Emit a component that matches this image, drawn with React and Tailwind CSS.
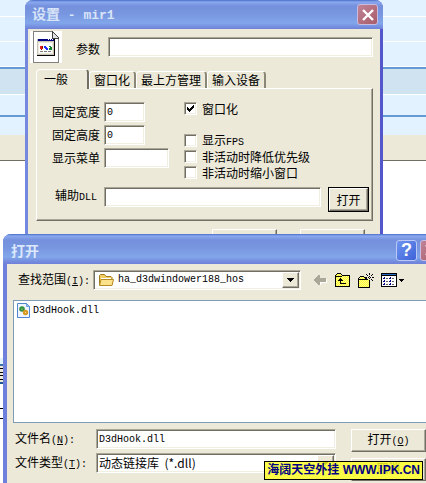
import { useState } from 'react'

// ------------------------------------------------------------
// Shared bevel styles
// ------------------------------------------------------------
const sunken =
  'border border-t-[#aca899] border-l-[#aca899] border-r-white border-b-white bg-white shadow-[inset_1px_1px_0_#716f64,inset_-1px_-1px_0_#f1efe2]'
const raised =
  'border border-t-white border-l-white border-r-[#716f64] border-b-[#716f64] bg-[#ece9d8] shadow-[inset_-1px_-1px_0_#aca899]'
const field = `${sunken} h-5 min-w-0 px-0.5 font-['Liberation_Mono',monospace] text-[10px] leading-[18px] outline-none`
const titleBar =
  'flex items-center bg-[linear-gradient(180deg,#4a6cc8_0,#8aa9f0_2px,#7590dc_6px,#7896e0_14px,#82a6ea_23px,#7894e2_26px,#6f80d8_100%)]'

const Mono = ({ children }) => (
  <span className="font-['Liberation_Mono',monospace] text-[10px]">{children}</span>
)

// ------------------------------------------------------------
// Icons
// ------------------------------------------------------------
const AppIcon = () => (
  <svg className="size-8 shrink-0" viewBox="0 0 32 32" shapeRendering="crispEdges">
    <path fill="#fff" d="M0 0h32v32H0z" />
    <path fill="#808080" d="M3 0h20v1H4v30h24V7h1v25H3z" />
    <path fill="#404040" d="M22 0h1v1h1v1h1v1h1v1h1v1h1v1h1v2h-7z" />
    <path fill="#e0e0e0" d="M23 2h1v1h1v1h1v1h1v1h1v1h-5z" />
    <path fill="#000" d="M7 8h18v17H7z" />
    <path fill="#c8c4b8" d="M7 8h17v16H7z" />
    <path fill="#ece9d8" d="M8 11h15v12H8z" />
    <path fill="#000080" d="M8 8h16v2H8z" />
    <path fill="#fff" d="M18 8h1v1h-1zM20 8h1v1h-1zM22 8h1v1h-1zM9 12h13v10H9z" />
    <path fill="#e02020" d="M10 15h3v3h-1v1h-1v-1h-1z" />
    <path fill="#800000" d="M12 15h1v2h-1zM11 18h1v1h-1z" />
    <path fill="#2030ff" d="M14 15h2v1h1v1h1v2h-2v-1h-1v-1h-1z" />
    <path fill="#108030" d="M19 15h2v1h1v3h-3v-2h1v-1h-1z" />
    <path fill="#808080" d="M10 20h3v1h-3zM14 20h3v1h-3zM18 20h3v1h-3z" />
  </svg>
)

const FolderIcon = () => (
  <svg className="h-[14px] w-4 shrink-0" viewBox="0 0 16 14">
    <path fill="#f3cf63" stroke="#a07a1c" d="M1.500 12V2.500l1-1h4l1.500 2h5l1 1V12z" />
    <path fill="#fff" d="M3 5h10v3H3z" />
    <path fill="#fbe28a" stroke="#b58b24" d="M1.500 12.500L3 6.500h12.500L14 12.500z" />
  </svg>
)

const DllIcon = () => (
  <svg className="h-[15px] w-[14px] shrink-0" viewBox="0 0 14 15">
    <path fill="#eef5ff" stroke="#4f86cf" d="M.5 .5H9.500l3 3v11H.5z" />
    <path fill="#a9c9f2" stroke="#4f86cf" strokeWidth=".7" d="M9.500 .5v3h3z" />
    <circle cx="5" cy="6" r="1.700" fill="#d8f0d0" stroke="#35913c" strokeWidth="2.200" />
    <circle cx="8.500" cy="9.500" r="1.600" fill="#fff0c0" stroke="#d79a25" strokeWidth="2.200" />
  </svg>
)

const BackIcon = () => (
  <svg className="h-[11px] w-[13px]" viewBox="0 0 13 11" shapeRendering="crispEdges">
    <path fill="#fff" d="M6 10h1V8h6V4h-1v3H6z" />
    <path fill="#aca899" d="M0 4h1V3h1V2h1V1h1V0h2v3h6v4H6v3H4V9H3V8H2V7H1V6H0z" />
  </svg>
)

// Yellow dither used by the old shell toolbar icons
const Dither = () => (
  <defs>
    <pattern id="dither" width="2" height="2" patternUnits="userSpaceOnUse">
      <path fill="#ffff30" d="M0 0h2v2H0z" />
      <path fill="#fff890" d="M0 0h1v1H0zM1 1h1v1H1z" />
    </pattern>
  </defs>
)

const UpIcon = () => (
  <svg className="h-[14px] w-[15px]" viewBox="0 0 15 14" shapeRendering="crispEdges">
    <Dither />
    <path fill="#000" d="M2 0h4v1h1v1h8v12H0V2h1V1h1z" />
    <path fill="url(#dither)" d="M2 1h4v1h1v1h7v10H1V2h1z" />
    <path fill="#000" d="M1 3h6v1H1zM5 5h1v1h1v1h1v1H6v2h5v1H5V8H3V7h1V6h1z" />
  </svg>
)

const NewFolderIcon = () => (
  <svg className="h-[15px] w-4" viewBox="0 0 16 15" shapeRendering="crispEdges">
    <path fill="#000" d="M2 3h4v1h1v1h5v10H0V5h1V4h1z" />
    <path fill="url(#dither)" d="M2 4h4v1h1v1h4v8H1V5h1z" />
    <path fill="#000" d="M1 6h9v1H1z" />
    <path fill="#ece9d8" d="M9 3h5v4h-3V6H9z" />
    <path
      fill="#000"
      d="M11 0h1v2h-1zM11 3h1v1h-1zM8 1h1v1H8zM9 2h1v1H9zM14 1h1v1h-1zM13 2h1v1h-1zM7 4h2v1H7zM10 4h1v1h-1zM12 4h1v1h-1zM14 4h2v1h-2zM11 5h1v1h-1zM9 6h1v1H9zM13 6h1v1h-1zM14 7h1v1h-1zM11 7h1v2h-1z"
    />
  </svg>
)

const ViewIcon = () => (
  <svg className="h-[14px] w-6" viewBox="0 0 24 14" shapeRendering="crispEdges">
    <path fill="#000" d="M0 0h16v14H0z" />
    <path fill="#fff" d="M1 3h14v10H1z" />
    <path fill="#2868c8" d="M1 1h14v1H1z" />
    <path
      fill="#000080"
      d="M3 4h1v2H2V5h1zM9 4h1v2H8V5h1zM3 7h1v2H2V8h1zM9 7h1v2H8V8h1zM3 10h1v2H2v-1h1zM9 10h1v2H8v-1h1z"
    />
    <path
      fill="#606060"
      d="M5 5h2v1H5zM11 5h2v1h-2zM5 8h2v1H5zM11 8h2v1h-2zM5 11h2v1H5zM11 11h2v1h-2z"
    />
    <path fill="#000" d="M18 6h5v1h-1v1h-1v1h-1V8h-1V7h-1z" />
  </svg>
)

const DropArrow = () => (
  <span className={`${raised} pointer-events-none absolute top-px right-px bottom-px flex w-[17px] items-center justify-center`}>
    <svg className="h-1 w-[7px]" viewBox="0 0 7 4" shapeRendering="crispEdges">
      <path fill="#000" d="M0 0h7v1H6v1H5v1H4v1H3V3H2V2H1V1H0z" />
    </svg>
  </span>
)

const CloseButton = () => (
  <button
    type="button"
    aria-label="关闭"
    className="flex size-[21px] shrink-0 items-center justify-center rounded-[3px] border border-[#c9bce0] bg-[linear-gradient(135deg,#c08498,#a85c68)]"
  >
    <svg className="size-3" viewBox="0 0 12 12">
      <path stroke="#fff" strokeWidth="2.400" d="M1 1l10 10M11 1L1 11" />
    </svg>
  </button>
)

// ------------------------------------------------------------
// Settings dialog
// ------------------------------------------------------------
const CheckRow = ({ children, defaultChecked }) => (
  <label className="flex h-[13px] items-center gap-[5px] leading-[13px] whitespace-nowrap">
    <span className="relative size-[13px] shrink-0">
      <input
        type="checkbox"
        defaultChecked={defaultChecked}
        className={`${sunken} peer block size-[13px] appearance-none`}
      />
      <svg
        className="pointer-events-none absolute top-[3px] left-[3px] hidden size-[7px] peer-checked:block"
        viewBox="0 0 7 7"
        shapeRendering="crispEdges"
      >
        <path d="M0 2h1v1h1v1h1V3h1V2h1V1h1V0h1v3H6v1H5v1H4v1H3v1H2V6H1V5H0z" />
      </svg>
    </span>
    <span>{children}</span>
  </label>
)

const tabs = ['一般', '窗口化', '最上方管理', '输入设备']

const SettingsDialog = () => {
  const [active, setActive] = useState('一般')

  return (
    <section className="absolute top-0 right-[43px] left-[25px] rounded-t-lg border-x-[3px] border-r-[#5357cb] border-l-[#7488df] bg-[#ece9d8]">
      <header className={`${titleBar} -mx-[3px] h-[29px] rounded-t-lg pr-[5px] pl-[7px]`}>
        <h1 className="flex-1 text-[14px] leading-5 font-bold text-[#d8e4f8]">
          设置<span className="font-['Liberation_Mono',monospace] text-[13px] whitespace-pre"> - mir1</span>
        </h1>
        <CloseButton />
      </header>

      <div className="flex items-center pt-0.5 pr-[7px] pl-0.5">
        <AppIcon />
        <label htmlFor="args" className="ml-[14px] pt-1">参数</label>
        <input id="args" className={`${field} ml-2 flex-1`} />
      </div>

      <div className="mt-1.5 mr-[7px] ml-2">
        <div role="tablist" className="flex h-[19px] items-end">
          {tabs.map((tab) => (
            <button
              key={tab}
              type="button"
              role="tab"
              aria-selected={tab === active}
              onClick={() => setActive(tab)}
              className={
                tab === active
                  ? 'relative z-10 -mb-px h-5 rounded-t-sm border border-r-2 border-b-0 border-white border-r-[#716f64] bg-[#ece9d8] pr-[19px] pb-[2px] pl-[7px]'
                  : 'h-[17px] rounded-t-sm border border-r-2 border-b-0 border-white border-r-[#8a8778] px-1'
              }
            >
              {tab}
            </button>
          ))}
        </div>

        <div className="border border-t-white border-r-[#716f64] border-b-[#716f64] border-l-white pb-2 shadow-[inset_-1px_-1px_0_#aca899]">
          <div className="flex pt-[13px] pl-[15px]">
            <div className="flex w-[132px] flex-col gap-[3px]">
              <div className="flex items-center gap-1">
                <label htmlFor="w">固定宽度</label>
                <input id="w" defaultValue="0" className={`${field} w-[41px]`} />
              </div>
              <div className="flex items-center gap-1">
                <label htmlFor="h">固定高度</label>
                <input id="h" defaultValue="0" className={`${field} w-[41px]`} />
              </div>
              <div className="flex items-center gap-1">
                <label htmlFor="menu">显示菜单</label>
                <input id="menu" className={`${field} w-[65px]`} />
              </div>
            </div>
            <div className="flex flex-col gap-[3px]">
              <div className="mb-4">
                <CheckRow defaultChecked>窗口化</CheckRow>
              </div>
              <CheckRow>显示<Mono>FPS</Mono></CheckRow>
              <CheckRow>非活动时降低优先级</CheckRow>
              <CheckRow>非活动时缩小窗口</CheckRow>
            </div>
          </div>
          <div className="mt-2 flex items-start gap-[7px] pr-[3px] pl-[18px]">
            <label htmlFor="dll" className="leading-4">辅助<Mono>DLL</Mono></label>
            <input id="dll" className={`${field} flex-1`} />
            <span className="border border-black">
              <button type="button" className={`${raised} block h-[23px] w-[39px]`}>打开</button>
            </span>
          </div>
        </div>
      </div>

      <div className="mt-2 mr-[15px] flex justify-end gap-[23px] pb-2">
        <button type="button" aria-label="确定" className={`${raised} h-6 w-[65px]`} />
        <button type="button" aria-label="取消" className={`${raised} h-6 w-[65px]`} />
      </div>
    </section>
  )
}

// ------------------------------------------------------------
// File open dialog, runs past the right edge of the screen
// ------------------------------------------------------------
const OpenDialog = () => (
  <section className="absolute top-[234px] -right-5 left-[3px] rounded-t-lg border-x-4 border-[#6f80dc] bg-[#ece9d8] pb-6">
    <header className={`${titleBar} -mx-1 h-[30px] gap-[3px] rounded-t-lg pt-0.5 pr-[5px] pl-2`}>
      <h2 className="flex-1 text-[14px] leading-5 font-bold text-[#dce8fc]">打开</h2>
      <button
        type="button"
        aria-label="帮助"
        className="size-[21px] rounded-[3px] border border-[#b9c8f4] bg-[linear-gradient(135deg,#6f94f0,#3c62d8)] font-['Liberation_Sans',sans-serif] text-[18px] leading-[18px] font-bold text-white"
      >
        ?
      </button>
      <CloseButton />
    </header>

    <div className="flex items-center pt-1.5 pl-[11px]">
      <label htmlFor="dir" className="w-[75px] whitespace-nowrap">
        查找范围<Mono>(<u>I</u>):</Mono>
      </label>
      <div className={`${sunken} relative flex h-5 w-52 items-center pl-1`}>
        <FolderIcon />
        <select
          id="dir"
          className="h-4 flex-1 appearance-none pl-1 font-['Liberation_Mono',monospace] text-[10px] outline-none"
        >
          <option>ha_d3dwindower188_hos</option>
        </select>
        <DropArrow />
      </div>
      <button type="button" aria-label="后退" className="ml-[13px]"><BackIcon /></button>
      <button type="button" aria-label="向上一级" className="ml-2"><UpIcon /></button>
      <button type="button" aria-label="新建文件夹" className="ml-2"><NewFolderIcon /></button>
      <button type="button" aria-label="查看" className="ml-[7px]"><ViewIcon /></button>
    </div>

    <ul className="mx-1.5 mt-2.5 h-[123px] border border-[#7f9db9] bg-white pt-0.5 pl-[3px]">
      <li className="flex items-center gap-0.5">
        <DllIcon />
        <Mono>D3dHook.dll</Mono>
      </li>
    </ul>

    <div className="mt-1.5 flex gap-[15px] pl-2">
      <div className="flex flex-col gap-1">
        <div className="flex items-center">
          <label htmlFor="name" className="w-[81px]">文件名<Mono>(<u>N</u>):</Mono></label>
          <input id="name" defaultValue="D3dHook.dll" className={`${field} w-60`} />
        </div>
        <div className="flex items-center">
          <label htmlFor="type" className="w-[81px]">文件类型<Mono>(<u>T</u>):</Mono></label>
          <div className={`${sunken} relative flex h-5 w-60 items-center`}>
            <select
              id="type"
              className="h-4 flex-1 appearance-none pl-0.5 font-['Noto_Sans_CJK_SC',sans-serif] text-[12px] leading-4 outline-none"
            >
              <option>动态链接库 &nbsp;(*.dll)</option>
            </select>
            <DropArrow />
          </div>
        </div>
      </div>
      <div className="flex flex-col gap-1.5">
        <button type="button" className={`${raised} h-[23px] w-[75px]`}>打开<Mono>(<u>O</u>)</Mono></button>
        <button type="button" className={`${raised} h-[23px] w-[75px] pb-1`}>取消</button>
      </div>
    </div>
  </section>
)

// Page rows behind the windows
const Backdrop = () => (
  <div>
    <div className="h-[17px] border-b border-white bg-[#e3f2ff]" />
    <div className="h-[25px] border-b border-white bg-[#e3f2ff]" />
    <div className="h-[25px] border-b border-white bg-[#e3f2ff]" />
    <div className="h-7 border-t-2 border-b border-t-[#639bd5] border-b-white bg-[#cfe4f0]" />
    <div className="h-5 bg-[#e3f2ff]" />
    <div className="h-5 border-t-2 border-[#639bd5] bg-[#e3f2ff]" />
    <div className="h-[26px] border-b border-[#716f64] bg-[#ece9d8]" />
    {/* slivers of the page that show left of the open dialog */}
    <div className="mt-[197px] h-2 border-b-2 border-[#3f6fa8] bg-[#e3f2ff]" />
    <div className="flex h-[18px] w-[3px] flex-col justify-evenly border-b-2 border-[#1f5590] bg-[#ece9d8]">
      <div className="h-px bg-black" />
      <div className="h-px bg-black" />
      <div className="h-px bg-black" />
      <div className="h-px bg-black" />
    </div>
    <div className="mt-6 h-[11px] w-[3px] border-y border-black" />
  </div>
)

export default function App() {
  return (
    <main className="relative h-screen overflow-hidden bg-white font-['Noto_Sans_CJK_SC',sans-serif] text-[12px] leading-[14px] text-black">
      <Backdrop />
      <SettingsDialog />
      <OpenDialog />
      <p className="absolute right-[3px] bottom-[3px] border border-black bg-[#ffff20]/80 px-0.5 font-['Liberation_Sans','Noto_Sans_CJK_SC',sans-serif] text-[12px] leading-[17px] font-bold whitespace-nowrap text-[#000080]">
        海阔天空外挂 WWW.IPK.CN
      </p>
    </main>
  )
}
